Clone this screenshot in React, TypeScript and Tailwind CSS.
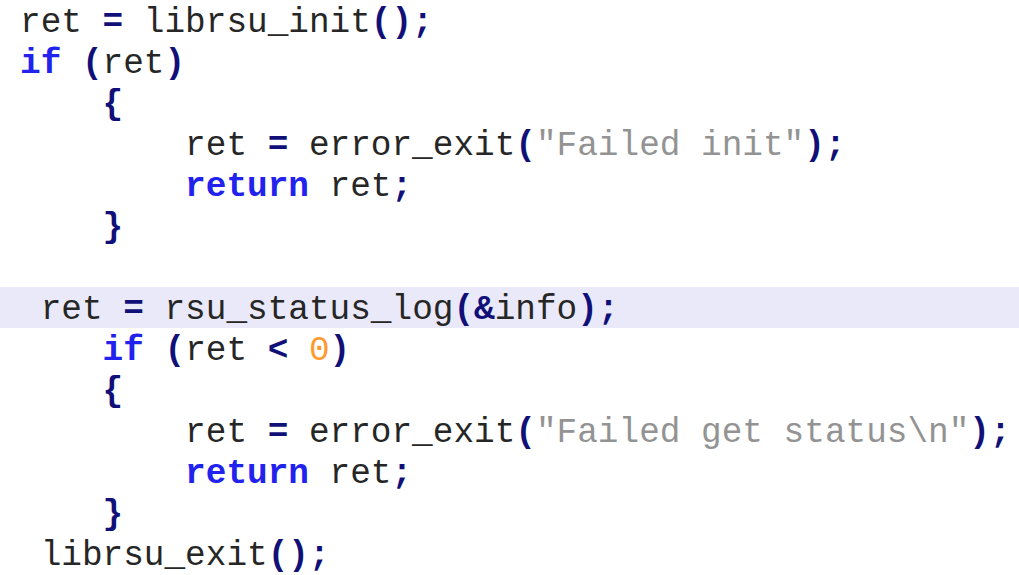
import React from "react";

type Seg = [string, string];

const K = "text-[#2222ee] font-bold";
const O = "text-[#101078] font-bold";
const S = "text-[#939393]";
const N = "text-[#ff9a30]";
const T = "text-[#262626]";

const lines: { segs: Seg[]; hl?: boolean }[] = [
  { segs: [[T, "ret "], [O, "="], [T, " librsu_init"], [O, "();"]] },
  { segs: [[K, "if"], [T, " "], [O, "("], [T, "ret"], [O, ")"]] },
  { segs: [[T, "    "], [O, "{"]] },
  { segs: [[T, "        ret "], [O, "="], [T, " error_exit"], [O, "("], [S, "\"Failed init\""], [O, ");"]] },
  { segs: [[T, "        "], [K, "return"], [T, " ret"], [O, ";"]] },
  { segs: [[T, "    "], [O, "}"]] },
  { segs: [[T, " "]] },
  { segs: [[T, " ret "], [O, "="], [T, " rsu_status_log"], [O, "(&"], [T, "info"], [O, ");"]], hl: true },
  { segs: [[T, "    "], [K, "if"], [T, " "], [O, "("], [T, "ret "], [O, "<"], [T, " "], [N, "0"], [O, ")"]] },
  { segs: [[T, "    "], [O, "{"]] },
  { segs: [[T, "        ret "], [O, "="], [T, " error_exit"], [O, "("], [S, "\"Failed get status\\n\""], [O, ");"]] },
  { segs: [[T, "        "], [K, "return"], [T, " ret"], [O, ";"]] },
  { segs: [[T, "    "], [O, "}"]] },
  { segs: [[T, " librsu_exit"], [O, "();"]] },
];

export default function App() {
  return (
    <div className="w-[1019px] h-[575px] overflow-hidden bg-white font-['Liberation_Mono',monospace] text-[34.4px] leading-[41px]">
      {lines.map((l, i) => (
        <div
          key={i}
          className={`h-[41px] whitespace-pre pl-[20px] ${l.hl ? "bg-[#e9e9f9]" : ""}`}
        >
          <div className="pt-[2px]">
            {l.segs.map((s, j) => (
              <span key={j} className={s[0]}>
                {s[1]}
              </span>
            ))}
          </div>
        </div>
      ))}
    </div>
  );
}
